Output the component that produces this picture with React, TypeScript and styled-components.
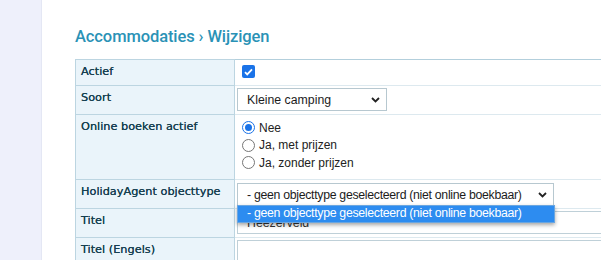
import React from 'react';
import styled, { createGlobalStyle } from 'styled-components';

const GlobalStyle = createGlobalStyle`
  html, body {
    margin: 0;
    padding: 0;
    background: #ffffff;
    overflow: hidden;
  }
  body {
    font-family: 'Liberation Sans', Arial, sans-serif;
  }
`;

const Page = styled.div`
  display: flex;
  height: 260px;
  overflow: hidden;
`;

const Sidebar = styled.aside`
  flex: 0 0 41px;
  background: #eef0fb;
  border-right: 1px solid #e4e7f4;
`;

const Main = styled.main`
  flex: 1;
  padding: 27px 0 0 33px;
  overflow: hidden;
`;

const Title = styled.h1`
  margin: 0 0 12px;
  font-family: Roboto, 'Liberation Sans', sans-serif;
  font-weight: 500;
  font-size: 16.5px;
  line-height: 20px;
  color: #2a92b6;
  letter-spacing: -0.1px;
`;

const FormTable = styled.table`
  width: 700px;
  border-collapse: collapse;
  border: 1px solid #b3cfdc;
`;

const Label = styled.th`
  width: 148px;
  padding: 4px 5px 0;
  background: #eaf4fa;
  border: 1px solid #bcd5e1;
  font-family: 'DejaVu Sans', Verdana, sans-serif;
  font-size: 11.3px;
  font-weight: normal;
  line-height: 16px;
  color: #163f50;
  text-shadow: 0 0 0.4px #163f50;
  text-align: left;
  vertical-align: top;
`;

const Value = styled.td<{ $h: number }>`
  height: ${p => p.$h}px;
  padding: 0 2px 0 2px;
  border-bottom: 1px solid #dde9ef;
  vertical-align: top;
  font-size: 12.3px;
  color: #222;
  position: relative;
`;

const Check = styled.span`
  display: inline-flex;
  align-items: center;
  justify-content: center;
  margin: 5px 0 0 5px;
  width: 13px;
  height: 13px;
  border-radius: 2px;
  background: #1a73e8;
`;

const SelectBox = styled.div<{ $w: number; $top?: number; $tight?: boolean }>`
  display: flex;
  align-items: center;
  justify-content: space-between;
  box-sizing: border-box;
  width: ${p => p.$w}px;
  height: 23px;
  margin-top: ${p => p.$top ?? 2}px;
  padding: 0 6px 0 9px;
  border: 1px solid #b7c8d0;
  background: #fff;
  font-size: 12.3px;
  letter-spacing: ${p => (p.$tight ? '-0.3px' : 'normal')};
  color: #1c1c1c;
  white-space: nowrap;
`;

const Chevron = () => (
  <svg width="9" height="6" viewBox="0 0 9 6">
    <path d="M1 1l3.5 3.5L8 1" fill="none" stroke="#222" strokeWidth="1.8" />
  </svg>
);

const RadioList = styled.div`
  padding: 4px 0 0 4px;
`;

const RadioRow = styled.label`
  display: flex;
  align-items: center;
  gap: 4px;
  height: 17.5px;
  font-size: 12px;
  color: #222;
`;

const Radio = styled.span<{ $on?: boolean }>`
  box-sizing: border-box;
  width: 13px;
  height: 13px;
  margin-left: 1px;
  border-radius: 50%;
  border: ${p => (p.$on ? '1px solid #1a73e8' : '1px solid #767676')};
  background: #fff;
  display: flex;
  align-items: center;
  justify-content: center;
  &::after {
    content: '';
    display: ${p => (p.$on ? 'block' : 'none')};
    width: 7px;
    height: 7px;
    border-radius: 50%;
    background: #1a73e8;
  }
`;

const TextInput = styled.div`
  box-sizing: border-box;
  height: 23px;
  margin-top: 2px;
  padding: 4px 9px 0;
  border: 1px solid #bfd0d8;
  font-size: 12.3px;
  color: #333;
`;

const DropList = styled.div`
  position: absolute;
  left: 2px;
  top: 25px;
  z-index: 2;
  box-sizing: border-box;
  width: 318px;
  height: 18px;
  padding: 0 0 0 9px;
  background: #2d8cf0;
  border: 1px solid #6aa6e0;
  box-shadow: 0 2px 4px rgba(0, 0, 0, 0.35);
  color: #fff;
  font-size: 12.3px;
  letter-spacing: -0.3px;
  line-height: 15px;
  white-space: nowrap;
`;

export default function App() {
  return (
    <>
      <GlobalStyle />
      <Page>
        <Sidebar />
        <Main>
          <Title>Accommodaties › Wijzigen</Title>
          <FormTable>
            <tbody>
              <tr>
                <Label>Actief</Label>
                <Value $h={25}>
                  <Check>
                    <svg width="9" height="8" viewBox="0 0 9 8">
                      <path d="M1 4.2l2.2 2.2L8 1.4" fill="none" stroke="#fff" strokeWidth="1.8" />
                    </svg>
                  </Check>
                </Value>
              </tr>
              <tr>
                <Label>Soort</Label>
                <Value $h={28}>
                  <SelectBox $w={150}>
                    Kleine camping
                    <Chevron />
                  </SelectBox>
                </Value>
              </tr>
              <tr>
                <Label>Online boeken actief</Label>
                <Value $h={64}>
                  <RadioList>
                    <RadioRow><Radio $on />Nee</RadioRow>
                    <RadioRow><Radio />Ja, met prijzen</RadioRow>
                    <RadioRow><Radio />Ja, zonder prijzen</RadioRow>
                  </RadioList>
                </Value>
              </tr>
              <tr>
                <Label>HolidayAgent objecttype</Label>
                <Value $h={28}>
                  <SelectBox $w={317} $top={3} $tight>
                    - geen objecttype geselecteerd (niet online boekbaar)
                    <Chevron />
                  </SelectBox>
                  <DropList>- geen objecttype geselecteerd (niet online boekbaar)</DropList>
                </Value>
              </tr>
              <tr>
                <Label>Titel</Label>
                <Value $h={28}>
                  <TextInput>Heezerveld</TextInput>
                </Value>
              </tr>
              <tr>
                <Label>Titel (Engels)</Label>
                <Value $h={28}>
                  <TextInput />
                </Value>
              </tr>
            </tbody>
          </FormTable>
        </Main>
      </Page>
    </>
  );
}
